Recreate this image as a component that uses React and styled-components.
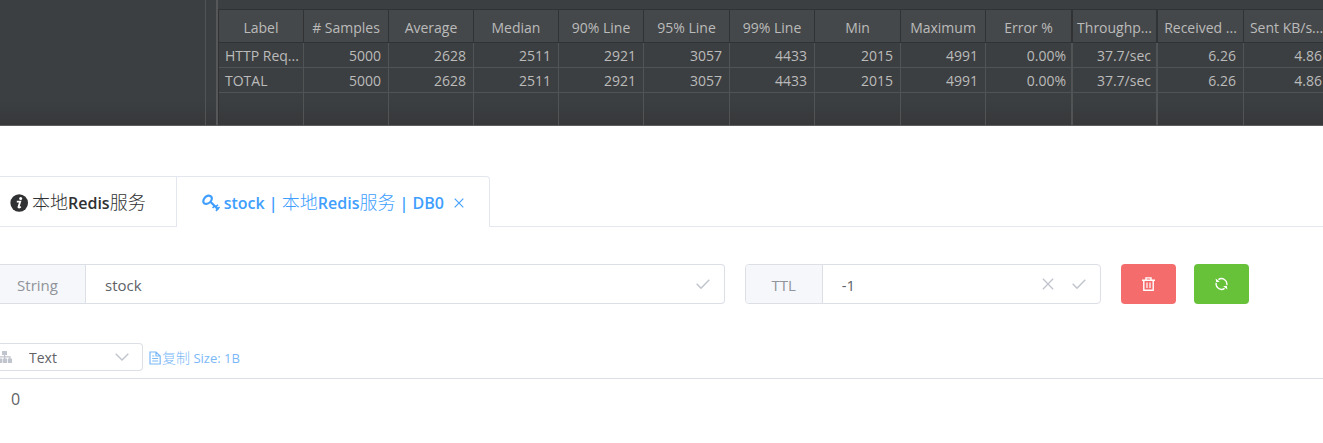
import React, { useState } from "react";
import styled, { createGlobalStyle } from "styled-components";

const columns = [
    { label: "Label", width: 85 },
    { label: "# Samples", width: 85 },
    { label: "Average", width: 85 },
    { label: "Median", width: 85 },
    { label: "90% Line", width: 85 },
    { label: "95% Line", width: 86 },
    { label: "99% Line", width: 85 },
    { label: "Min", width: 86 },
    { label: "Maximum", width: 85 },
    { label: "Error %", width: 87, thick: true },
    { label: "Throughp...", width: 85, thick: true },
    { label: "Received ...", width: 86 },
    { label: "Sent KB/s...", width: 86 },
];

const rows = [
    ["HTTP Req...", "5000", "2628", "2511", "2921", "3057", "4433", "2015", "4991", "0.00%", "37.7/sec", "6.26", "4.86"],
    ["TOTAL", "5000", "2628", "2511", "2921", "3057", "4433", "2015", "4991", "0.00%", "37.7/sec", "6.26", "4.86"],
];

const GlobalStyle = createGlobalStyle`
    * {
        box-sizing: border-box;
    }
    body {
        margin: 0;
        background: #fff;
        color: #606266;
        font-family: "Open Sans", "Noto Sans CJK SC", sans-serif;
        font-size: 16px;
        overflow-x: hidden;
    }
    button, input, select, textarea {
        font: inherit;
        color: inherit;
        margin: 0;
    }
`;

const ReportPane = styled.section`
    display: flex;
    height: 126px;
    overflow: hidden;
    background: linear-gradient(#3c3f41 80%, #36383a);
    border-bottom: 1px solid #5e5e5e;
`;

const TreePane = styled.div`
    flex: none;
    width: 206px;
    border-right: 1px solid #515455;
`;

const SplitHandle = styled.div`
    flex: none;
    width: 12px;
    border-right: 2px solid #555758;
`;

const TableArea = styled.div`
    flex: 1;
    min-width: 0;
    padding-top: 9px;
    overflow: hidden;
`;

const ReportTable = styled.table`
    width: 1112px;
    height: 116px;
    table-layout: fixed;
    border-collapse: separate;
    border-spacing: 0;
    border-left: 1px solid #303234;
    color: #bbb;
    font-size: 14px;
    line-height: 22px;
`;

const HeadCell = styled.th`
    height: 34px;
    padding: 4px 0 0;
    background: #45484a;
    border: solid #303234;
    border-width: 1px ${props => (props.$thick ? 2 : 1)}px 1px 0;
    font-weight: 400;
    text-align: center;
    white-space: nowrap;
`;

const Cell = styled.td`
    height: ${props => (props.$rest ? "auto" : "25px")};
    padding: 2px ${props => (props.$left ? 0 : props.$thick ? 5 : 7)}px 0 ${props => (props.$left ? 6 : 0)}px;
    border: solid #515455;
    border-width: 0 ${props => (props.$thick ? 2 : 1)}px ${props => (props.$rest ? 0 : 1)}px 0;
    text-align: ${props => (props.$left ? "left" : "right")};
    white-space: nowrap;
`;

const TabBar = styled.div`
    display: flex;
    margin-top: 50px;

    &::after {
        content: "";
        flex: 1;
        border-bottom: 1px solid #e4e7ed;
    }
`;

const Tab = styled.div`
    display: flex;
    align-items: center;
    height: 51px;
    padding: ${props => (props.$first ? "2px 30px 0 10px" : "2px 25px 0")};
    border: solid #e4e7ed;
    border-width: 1px 1px ${props => (props.$active ? 0 : 1)}px 0;
    border-top-right-radius: ${props => (props.$first ? 0 : 4)}px;
    color: ${props => (props.$active ? "#409eff" : "#303133")};
`;

const TabButton = styled.button`
    display: flex;
    align-items: center;
    gap: 4px;
    padding: 0;
    border: 0;
    background: none;
    font-size: 16px;
    font-weight: 600;
    white-space: nowrap;
    cursor: pointer;
`;

const Han = styled.span`
    font-size: ${props => props.$size || 18}px;
    font-weight: 300;
    line-height: 1;
`;

const IconButton = styled.button`
    display: flex;
    padding: 0;
    border: 0;
    background: none;
    cursor: pointer;
`;

const TabClose = styled(IconButton)`
    margin-left: 10px;
`;

const KeyForm = styled.form`
    display: flex;
    margin-top: 37px;
    padding-right: 74px;
`;

const FieldGroup = styled.div`
    display: flex;
    flex: ${props => props.$grow} 1 0;
    min-width: 0;
    height: 40px;
    margin-right: 20px;
    border: 1px solid #dcdfe6;
    border-left-width: ${props => (props.$cut ? 0 : 1)}px;
    border-radius: ${props => (props.$cut ? "0 4px 4px 0" : "4px")};
    overflow: hidden;
`;

const Prepend = styled.label`
    display: flex;
    flex: none;
    align-items: center;
    justify-content: center;
    width: ${props => props.$width}px;
    padding-right: ${props => props.$shift || 0}px;
    padding-top: 2px;
    background: #f5f7fa;
    border-right: 1px solid #dcdfe6;
    color: #909399;
    font-size: 15px;
`;

const TextInput = styled.input`
    flex: 1;
    min-width: 0;
    padding: 2px 0 0 19px;
    border: 0;
    outline: 0;
    background: none;
    font-size: 15px;
`;

const Suffix = styled.div`
    display: flex;
    align-items: center;
    gap: 18px;
    padding-right: 14px;
    color: #c0c4cc;
`;

const ActionButton = styled.button`
    display: flex;
    flex: none;
    align-items: center;
    justify-content: center;
    width: 55px;
    height: 40px;
    padding: 0;
    border: 0;
    border-radius: 4px;
    background: ${props => props.$color};
    color: #fff;
    cursor: pointer;

    & + & {
        margin-left: 18px;
    }
`;

const FormatBar = styled.div`
    display: flex;
    align-items: center;
    gap: 6px;
    height: 28px;
    margin-top: 39px;
`;

const FormatPicker = styled.div`
    display: flex;
    align-items: center;
    width: 143px;
    height: 28px;
    padding-right: 13px;
    border: 1px solid #dcdfe6;
    border-left: 0;
    border-radius: 0 4px 4px 0;
    color: #c0c4cc;
    overflow: hidden;

    svg {
        flex: none;
    }
`;

const FormatSelect = styled.select`
    flex: 1;
    min-width: 0;
    height: 26px;
    padding: 0 0 0 17px;
    border: 0;
    outline: 0;
    appearance: none;
    background: none;
    color: #606266;
    font-size: 14px;
`;

const CopyLink = styled.a`
    display: flex;
    align-items: center;
    padding-top: 2px;
    color: #79b8f8;
    font-size: 13px;
    text-decoration: none;
    white-space: pre;
`;

const ValueBox = styled.textarea`
    display: block;
    width: 100%;
    height: 64px;
    margin-top: 7px;
    padding: 8px 11px;
    border: 0;
    border-top: 1px solid #dcdfe6;
    outline: 0;
    resize: none;
    background: none;
    font-size: 16px;
    line-height: 24px;
`;

const InfoIcon = () => (
    <svg width="18" height="18" viewBox="0 0 18 18">
        <circle cx="9.2" cy="9" r="8.8" fill="currentColor" />
        <circle cx="10.7" cy="4.6" r="1.5" fill="#fff" />
        <path d="M6.8 7.6H10.2L8.4 13.2Q8.8 14 10.8 12.8" fill="none" stroke="#fff" strokeWidth="1.8" />
    </svg>
);

const KeyIcon = () => (
    <svg width="18" height="18" viewBox="0 0 18 18" fill="none" stroke="currentColor" strokeWidth="2.2">
        <path d="M1.6 8.6C.6 6.4 2.6 2.8 5.4 1.9 7.8 1.2 10.2 2.4 9.8 4.9 9.4 7.4 6.8 9.6 4.4 9.9 3 10 2 9.6 1.6 8.6Z" />
        <path d="M8.4 7.8 16.4 15.6" />
        <path d="M12.8 11.4 10.6 14M15.8 14.6 14 17M13.8 12.6 16 10.8M15.6 14.6 17.6 13" strokeWidth="1.6" />
    </svg>
);

const CloseIcon = ({ size = 10 }) => (
    <svg width={size} height={size} viewBox="0 0 10 10" fill="none" stroke="currentColor" strokeWidth="1.1">
        <path d="M.7.7 9.3 9.3M9.3.7.7 9.3" />
    </svg>
);

const CheckIcon = () => (
    <svg width="14" height="12" viewBox="0 0 14 12" fill="none" stroke="currentColor" strokeWidth="1.5">
        <path d="M.7 5.8 5 10.2 13.3 1.8" />
    </svg>
);

const TrashIcon = () => (
    <svg width="13" height="14" viewBox="0 0 13 14" fill="none" stroke="currentColor" strokeWidth="1.4">
        <path d="M0 3.2H13M4 3V.9H9V3M1.8 3.4V13.2H11.2V3.4" />
        <path d="M5 5.5V11M8 5.5V11" strokeWidth="1.2" />
    </svg>
);

const RefreshIcon = () => (
    <svg width="13" height="14" viewBox="0 0 13 14" fill="none" stroke="currentColor" strokeWidth="1.4">
        <path d="M3.4 2.6A5.4 5.4 0 0 1 11.8 8M9.6 11.4A5.4 5.4 0 0 1 1.2 6" />
        <path d="M.6 1.4 1.2 5.2 4.8 4.8ZM12.4 12.6 11.8 8.8 8.2 9.2Z" fill="currentColor" stroke="none" />
    </svg>
);

const SitemapIcon = () => (
    <svg width="12" height="14" viewBox="0 0 12 14" fill="currentColor">
        <rect x="2" y="1" width="5" height="4" rx=".6" />
        <rect x="-2" y="8.5" width="4.4" height="4.5" rx=".6" />
        <rect x="3" y="8.5" width="4" height="4.5" rx=".6" />
        <rect x="7.8" y="8.5" width="4.2" height="4.5" rx=".6" />
        <path d="M4 5H5.2V6.2H10.6V9H9.4V7.4H5.2V9H4V7.4H0V6.2H4Z" />
    </svg>
);

const DocumentIcon = () => (
    <svg width="13" height="14" viewBox="0 0 13 14" fill="none" stroke="currentColor" strokeWidth="1.2">
        <path d="M1 1H7L11.2 5V13H1ZM7 1V5H11M3.2 7.5H9.2M3.2 10H9.2M3.2 5H5.2" />
    </svg>
);

const ArrowIcon = () => (
    <svg width="14" height="8" viewBox="0 0 14 8" fill="none" stroke="currentColor" strokeWidth="1.4">
        <path d="M.7.7 7 7 13.3.7" />
    </svg>
);

const AggregateReport = () => (
    <ReportPane>
        <TreePane />
        <SplitHandle />
        <TableArea>
            <ReportTable>
                <colgroup>
                    {columns.map(col => (
                        <col key={col.label} style={{ width: col.width }} />
                    ))}
                </colgroup>
                <thead>
                    <tr>
                        {columns.map(col => (
                            <HeadCell key={col.label} $thick={col.thick}>{col.label}</HeadCell>
                        ))}
                    </tr>
                </thead>
                <tbody>
                    {rows.map(row => (
                        <tr key={row[0]}>
                            {row.map((value, i) => (
                                <Cell key={columns[i].label} $left={i === 0} $thick={columns[i].thick}>{value}</Cell>
                            ))}
                        </tr>
                    ))}
                    <tr>
                        {columns.map(col => (
                            <Cell key={col.label} $rest $thick={col.thick} />
                        ))}
                    </tr>
                </tbody>
            </ReportTable>
        </TableArea>
    </ReportPane>
);

const App = () => {
    const [name, setName] = useState("stock");
    const [ttl, setTtl] = useState("-1");
    const [content, setContent] = useState("0");

    return (
        <>
            <GlobalStyle />
            <AggregateReport />
            <main>
                <TabBar>
                    <Tab $first>
                        <TabButton type="button">
                            <InfoIcon />
                            <span><Han>本地</Han>Redis<Han>服务</Han></span>
                        </TabButton>
                    </Tab>
                    <Tab $active>
                        <TabButton type="button">
                            <KeyIcon />
                            <span>stock | <Han>本地</Han>Redis<Han>服务</Han> | DB0</span>
                        </TabButton>
                        <TabClose type="button" aria-label="Close tab">
                            <CloseIcon />
                        </TabClose>
                    </Tab>
                </TabBar>
                <KeyForm onSubmit={e => e.preventDefault()}>
                    <FieldGroup $grow={725} $cut>
                        <Prepend htmlFor="key-name" $width={86} $shift={10}>String</Prepend>
                        <TextInput id="key-name" value={name} onChange={e => setName(e.target.value)} />
                        <Suffix>
                            <IconButton type="submit" aria-label="Rename"><CheckIcon /></IconButton>
                        </Suffix>
                    </FieldGroup>
                    <FieldGroup $grow={355}>
                        <Prepend htmlFor="key-ttl" $width={77}>TTL</Prepend>
                        <TextInput id="key-ttl" value={ttl} onChange={e => setTtl(e.target.value)} />
                        <Suffix>
                            <IconButton type="button" aria-label="Persist" onClick={() => setTtl("-1")}>
                                <CloseIcon size={12} />
                            </IconButton>
                            <IconButton type="submit" aria-label="Save TTL"><CheckIcon /></IconButton>
                        </Suffix>
                    </FieldGroup>
                    <ActionButton type="button" aria-label="Delete" $color="#f56c6c"><TrashIcon /></ActionButton>
                    <ActionButton type="button" aria-label="Refresh" $color="#67c23a"><RefreshIcon /></ActionButton>
                </KeyForm>
                <FormatBar>
                    <FormatPicker>
                        <SitemapIcon />
                        <FormatSelect aria-label="Format" defaultValue="Text">
                            <option>Text</option>
                            <option>Hex</option>
                            <option>Json</option>
                        </FormatSelect>
                        <ArrowIcon />
                    </FormatPicker>
                    <CopyLink href="#copy">
                        <DocumentIcon />
                        <span><Han $size={14}>复制</Han> Size: 1B</span>
                    </CopyLink>
                </FormatBar>
                <ValueBox aria-label="Value" value={content} onChange={e => setContent(e.target.value)} />
            </main>
        </>
    );
};

export default App;
